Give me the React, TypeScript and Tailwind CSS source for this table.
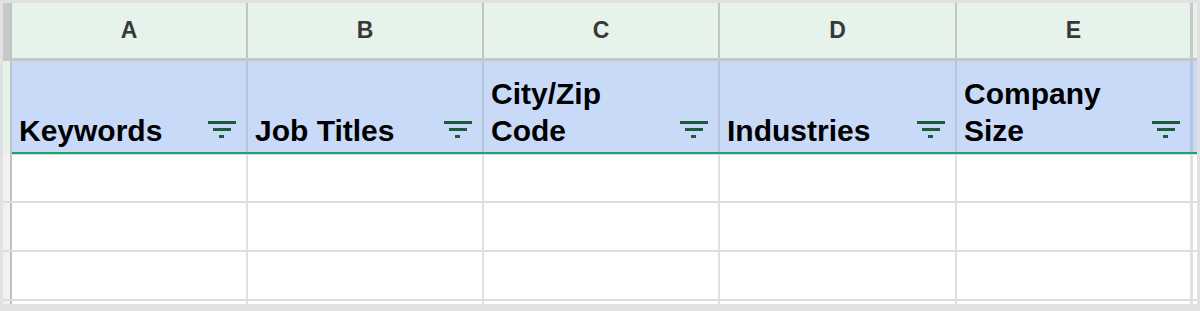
const columns = ["A", "B", "C", "D", "E"];

// cell widths include the grid line on the right (border-box)
const widths = ["w-[236px]", "w-[236px]", "w-[236px]", "w-[237px]", "w-[236px]"];

const headers: string[][] = [
  ["Keywords"],
  ["Job Titles"],
  ["City/Zip", "Code"],
  ["Industries"],
  ["Company", "Size"],
];

function FilterIcon() {
  return (
    <svg width="28" height="17" viewBox="0 0 28 17" className="shrink-0">
      <rect x="0" y="0" width="28" height="3" fill="#1d5b3c" />
      <rect x="5" y="7" width="18" height="3" fill="#1d5b3c" />
      <rect x="11" y="14" width="5" height="3" fill="#1d5b3c" />
    </svg>
  );
}

export default function App() {
  return (
    <div
      className="w-[1200px] h-[311px] bg-[#e1e1e1] pt-[3px] px-[3px] overflow-hidden"
      style={{ fontFamily: '"Liberation Sans", Arial, sans-serif' }}
    >
      {/* Column letters */}
      <div className="flex h-[58px] border-b-[3px] border-[#c6c6c6]">
        <div className="w-[7px] bg-[#c8c8c8]" />
        <div className="w-[2px] bg-[#c2c2c2]" />
        {columns.map((c, i) => (
          <div
            key={c}
            className={`${widths[i]} shrink-0 bg-[#e5f3ea] flex items-center justify-center text-[23px] font-bold text-[#383838] ${
              i < 4 ? "border-r-2 border-[#c4c4c4]" : "border-r-[3px] border-[#c8c8c8]"
            }`}
          >
            {c}
          </div>
        ))}
        <div className="w-[4px] bg-[#e5f3ea]" />
      </div>

      {/* Header row, green underline starts after the row gutter */}
      <div className="flex h-[93px]">
        <div className="w-[7px] bg-[#e4f3e9]" />
        <div className="w-[2px] bg-[#c2c2c2]" />
        <div className="flex flex-1 border-b-2 border-[#1fa363]">
          {headers.map((lines, i) => (
            <div
              key={i}
              className={`${widths[i]} shrink-0 bg-[#c9daf8] flex items-end justify-between pl-[7px] pr-[10px] ${
                i < 4 ? "border-r-2 border-[#b5c4df]" : "border-r-[3px] border-[#b5c4df]"
              }`}
            >
              <div className="text-[30px] leading-[37px] font-bold text-black pb-[3px]">
                {lines.map((l) => (
                  <div key={l}>{l}</div>
                ))}
              </div>
              <div className="pb-[14px]">
                <FilterIcon />
              </div>
            </div>
          ))}
          <div className="w-[4px] bg-[#c9daf8]" />
        </div>
      </div>
      <div className="flex h-px">
        <div className="w-[7px] bg-[#f1f1f1]" />
        <div className="w-[2px] bg-[#c2c2c2]" />
        <div className="flex-1 bg-[#d3ddef]" />
      </div>

      {/* Empty data rows */}
      {[48, 49, 49, 3].map((h, r) => (
        <div
          key={r}
          className={`flex ${r < 3 ? "border-b-2 border-[#dedede]" : ""}`}
          style={{ height: h }}
        >
          <div className="w-[7px] bg-[#f1f1f1]" />
          <div className="w-[2px] bg-[#c2c2c2]" />
          {columns.map((c, i) => (
            <div
              key={c}
              className={`${widths[i]} shrink-0 bg-white ${
                i < 4 ? "border-r-2 border-[#e0e0e0]" : "border-r-[3px] border-[#e0e0e0]"
              }`}
            />
          ))}
          <div className="w-[4px] bg-white" />
        </div>
      ))}
    </div>
  );
}
